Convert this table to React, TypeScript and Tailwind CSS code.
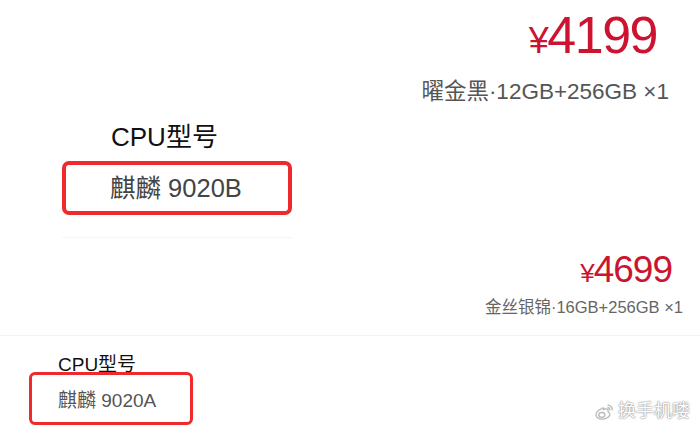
import React from "react";

const font = "font-['Liberation_Sans','Noto_Sans_CJK_SC',sans-serif]";

function WeiboLogo() {
  return (
    <svg width="22" height="18" viewBox="0 0 24 20" fill="none">
      <g stroke="#bdbdbd" strokeWidth="1.6" fill="#ffffff">
        <path d="M9.5 6.2c-3.6 1.2-7.2 4.6-6.4 7.9.9 3.4 6.1 4.6 10.4 3.3 3.3-1 5.7-3.3 4.9-5.6-.5-1.5-2.2-1.7-2-2.6.3-1.2.1-2.6-1.6-2.7-1.2-.1-2.4.5-3.2.7.6-1.3.4-2.4-2.1-1z" />
        <ellipse cx="9.6" cy="13.2" rx="3.4" ry="2.6" />
      </g>
      <path d="M16.5 2.5c2.6.1 4.8 2.1 4.6 5" stroke="#bdbdbd" strokeWidth="1.6" strokeLinecap="round" />
      <path d="M16.4 5.3c1.2.1 2.1 1 2 2.3" stroke="#bdbdbd" strokeWidth="1.6" strokeLinecap="round" />
    </svg>
  );
}

export default function App() {
  return (
    <div className={`relative w-[700px] h-[437px] overflow-hidden bg-white ${font}`}>
      <div className="h-[336px] border-b border-[#f2f2f2] flex flex-col">
        <div className="flex flex-col items-end pr-[31px] pt-[7px]">
          <div className="mr-[12px] text-[52px] leading-[56px] text-[#cc1430] tracking-[-1.5px]">
            <span className="text-[36px]">¥</span>4199
          </div>
          <div className="mt-[9px] text-[22.5px] leading-[27px] text-[#555555]">曜金黑·12GB+256GB ×1</div>
        </div>
        <div className="ml-[111px] mt-[16px] text-[26px] leading-[32px] text-[#111111]">CPU型号</div>
        <div className="ml-[62px] mt-[8px] w-[230px] h-[54px] border-4 border-[#ee2a2c] rounded-[7px] flex items-center pl-[44px] text-[25.5px] text-[#444444]">
          麒麟 9020B
        </div>
        <div className="ml-[62px] mt-[22px] w-[230px] h-px bg-[#f6f6f6]" />
        <div className="flex flex-col items-end pr-[17px] mt-[12px]">
          <div className="mr-[11px] text-[37px] leading-[40px] text-[#cc1430] tracking-[-1px]">
            <span className="text-[26px]">¥</span>4699
          </div>
          <div className="mt-[3px] text-[16.5px] leading-[22px] text-[#666666]">金丝银锦·16GB+256GB ×1</div>
        </div>
      </div>
      <div className="flex flex-col">
        <div className="ml-[58px] mt-[18px] text-[19px] leading-[22px] text-[#111111]">CPU型号</div>
        <div className="ml-[29px] -mt-[4px] w-[164px] h-[53px] border-[3px] border-[#ee2a2c] rounded-[6px] flex items-center pl-[26px] pt-[6px] text-[19px] text-[#555555]">
          麒麟 9020A
        </div>
      </div>
      <div className="absolute right-[10px] bottom-[12px] flex items-center gap-[3px] text-[18px] text-white [text-shadow:0_0_2px_#888,0_0_1px_#888]">
        <WeiboLogo />
        <span>换手机喽</span>
      </div>
    </div>
  );
}
